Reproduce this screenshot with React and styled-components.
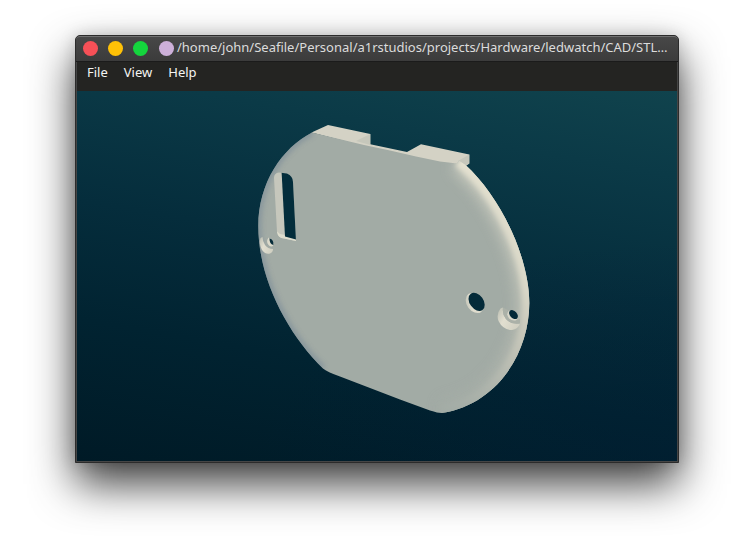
import React from 'react';
import styled, { createGlobalStyle } from 'styled-components';

const GlobalStyle = createGlobalStyle`
  * { box-sizing: border-box; }
  body { margin: 0; background: #fff; overflow: hidden; }
`;

const Desktop = styled.main`
  height: 548px;
  padding: 35px 75px 0;
  font-family: 'Noto Sans', sans-serif;
  font-size: 13px;
`;

const WindowFrame = styled.section`
  display: flex;
  flex-direction: column;
  width: 604px;
  height: 428px;
  overflow: hidden;
  border: 1px solid #2b2b2b;
  border-radius: 5px 5px 0 0;
  background: #454545;
  box-shadow: 0 21px 44px rgba(0, 0, 0, 0.76), 0 0 16px rgba(0, 0, 0, 0.15);
`;

const TitleBar = styled.header`
  display: flex;
  align-items: center;
  flex: none;
  height: 26px;
  padding: 0 0 1px 7px;
  border-top: 1px solid #707070;
  border-bottom: 1px solid #1b1b1b;
  border-radius: 4px 4px 0 0;
  background: linear-gradient(#474747, #3b3b3b);
`;

const Controls = styled.div`
  display: flex;
  gap: 10px;
`;

const Dot = styled.span`
  flex: none;
  width: 15px;
  height: 15px;
  border-radius: 50%;
  background: ${({ $color }) => $color};
`;

const AppDot = styled(Dot)`
  margin-left: 11px;
`;

const Title = styled.h1`
  margin: 0 0 3px 3px;
  color: #dcdcdc;
  font-size: 13px;
  font-weight: 400;
  line-height: 18px;
  white-space: nowrap;
`;

const MenuBar = styled.nav`
  display: flex;
  flex: none;
  gap: 16px;
  height: 29px;
  margin: 0 1px;
  padding: 1px 10px 0;
  background: #242422;
`;

const MenuItem = styled.span`
  color: #f4f4f2;
  line-height: 18px;
`;

const Viewport = styled.div`
  flex: none;
  width: 600px;
  height: 370px;
  margin: 0 1px;
  background:
    radial-gradient(ellipse 420px 220px at 100% 100%, rgba(0, 28, 52, 0.4), rgba(0, 28, 52, 0)),
    linear-gradient(190deg, #10434d 0%, #0b3a47 18%, #052d3c 45%, #012331 70%, #001a26 100%);
`;

const Model = styled.svg`
  display: block;
  width: 600px;
  height: 370px;
`;

const rightCurve = 'C501,197 529.3,258 529.3,303 C529.3,352 498,404 442,413';
const leftCurve = 'C288,334 258.3,280 258.3,226 C258.3,183 282,148 312,132.5';
const rightEdge = `M459,160.5 L465,164.5 ${rightCurve}`;
const leftEdge = `M323,368.5 ${leftCurve}`;
const plate = `M312,132.5 L364,145 L390,150.5 L416,156.5 L440,161.5 L457,163.5 L459,160.5 L465,164.5 ${rightCurve} Q438,413 430,410.5 L400,399.5 L340,376.5 Q327,372 323,368.5 ${leftCurve} Z`;

const Plate = () => (
  <Model viewBox="77 91 600 370">
    <defs>
      <clipPath id="plate"><path d={plate} /></clipPath>
      <clipPath id="slot"><path d="M274,178 Q274,173 279,172.5 L287,173.5 Q293,176 293,182 L296,241 L284,238.5 Q278,238 277,232 Z" /></clipPath>
      <filter id="softTight" x="-30%" y="-30%" width="160%" height="160%"><feGaussianBlur stdDeviation="2.4" /></filter>
      <filter id="softWide" x="-40%" y="-30%" width="180%" height="160%"><feGaussianBlur stdDeviation="7" /></filter>
      <linearGradient id="rim" x1="0" y1="160" x2="0" y2="413" gradientUnits="userSpaceOnUse">
        <stop offset="0" stopColor="#e4e1d0" />
        <stop offset="0.5" stopColor="#dad8c8" />
        <stop offset="0.75" stopColor="#c2c3b7" />
        <stop offset="1" stopColor="#a2aba5" />
      </linearGradient>
      <linearGradient id="bore" x1="0" y1="0" x2="1" y2="0.6">
        <stop offset="0" stopColor="#b9bcb1" />
        <stop offset="0.45" stopColor="#e2dfd0" />
        <stop offset="1" stopColor="#d2d1c3" />
      </linearGradient>
    </defs>
    <path d="M311.5,132.5 L328,125 L370.3,134 V144.3 L407,152 L421,144.3 L469.3,154.5 V163.5 L464,167 L435,163 L364,146 Z" fill="#d4d2c5" />
    <path d="M356,141 L370.3,134 V145 Z M458,161 L469.3,154.5 V163.5 L464,167 Z" fill="#c6c7bb" />
    <path d={plate} fill="#a2aba5" />
    <g clipPath="url(#plate)" fill="none">
      <path d={leftEdge} stroke="#80909a" strokeWidth="6" filter="url(#softTight)" opacity="0.8" />
      <path d={rightEdge} stroke="url(#rim)" strokeWidth="24" opacity="0.6" filter="url(#softWide)" />
      <path d={rightEdge} stroke="url(#rim)" strokeWidth="14" filter="url(#softTight)" />
    </g>
    <g clipPath="url(#slot)">
      <path d="M270,168 H300 V245 H270 Z" fill="#c6c7bc" />
      <path d="M274,229 L280,234 L296,237 V243 H275 Z" fill="#deddcd" />
      <path d="M281.5,170 L300,170 V240.5 L285,236.5 Z" fill="#032d3b" />
    </g>
    <path d="M260.5,238 Q258.5,243 262,250 Q266,255 270,253.5 Q273,252 273,249 Q268,249 265,245 Q262.5,241 262.5,237 Z" fill="url(#bore)" />
    <path d="M268.5,237.5 Q265.5,242 269,245.5 Q271,247 273,246 L273.3,243 Z" fill="#dcdacb" />
    <path d="M269.5,238.5 Q274,239.5 273.3,245 Q269.5,244 269.5,238.5 Z" fill="#052b39" />
    <ellipse cx="474.8" cy="303" rx="8" ry="11" transform="rotate(-36 474.8 303)" fill="url(#bore)" />
    <ellipse cx="476.6" cy="301.8" rx="6.9" ry="10" transform="rotate(-36 476.6 301.8)" fill="#032a39" />
    <path d="M500.5,308.5 Q496,314 498.5,321 Q503,330 512,330 Q518,329 520,323.5 Q511,325 506,319 Q502,314 503,307.5 Z" fill="url(#bore)" />
    <path d="M503,307.5 Q502,314 506,319 Q511,325 520,323.5 L520,319 Q513,322 508.5,318 Q506,314 508,310 Z" fill="#abb1a8" />
    <path d="M509,310.5 Q505.5,314 509,318.5 Q513,321.5 516.5,320 L518,317 Z" fill="#d9d7c9" />
    <ellipse cx="513.5" cy="314.6" rx="3.5" ry="5.2" transform="rotate(-43 513.5 314.6)" fill="#032938" />
  </Model>
);

export default function App() {
  return (
    <>
      <GlobalStyle />
      <Desktop>
        <WindowFrame>
          <TitleBar>
            <Controls>
              <Dot $color="#f75057" />
              <Dot $color="#ffc107" />
              <Dot $color="#14d53d" />
            </Controls>
            <AppDot $color="#cdb0d9" />
            <Title>/home/john/Seafile/Personal/a1rstudios/projects/Hardware/ledwatch/CAD/STL…</Title>
          </TitleBar>
          <MenuBar>
            <MenuItem>File</MenuItem>
            <MenuItem>View</MenuItem>
            <MenuItem>Help</MenuItem>
          </MenuBar>
          <Viewport>
            <Plate />
          </Viewport>
        </WindowFrame>
      </Desktop>
    </>
  );
}
